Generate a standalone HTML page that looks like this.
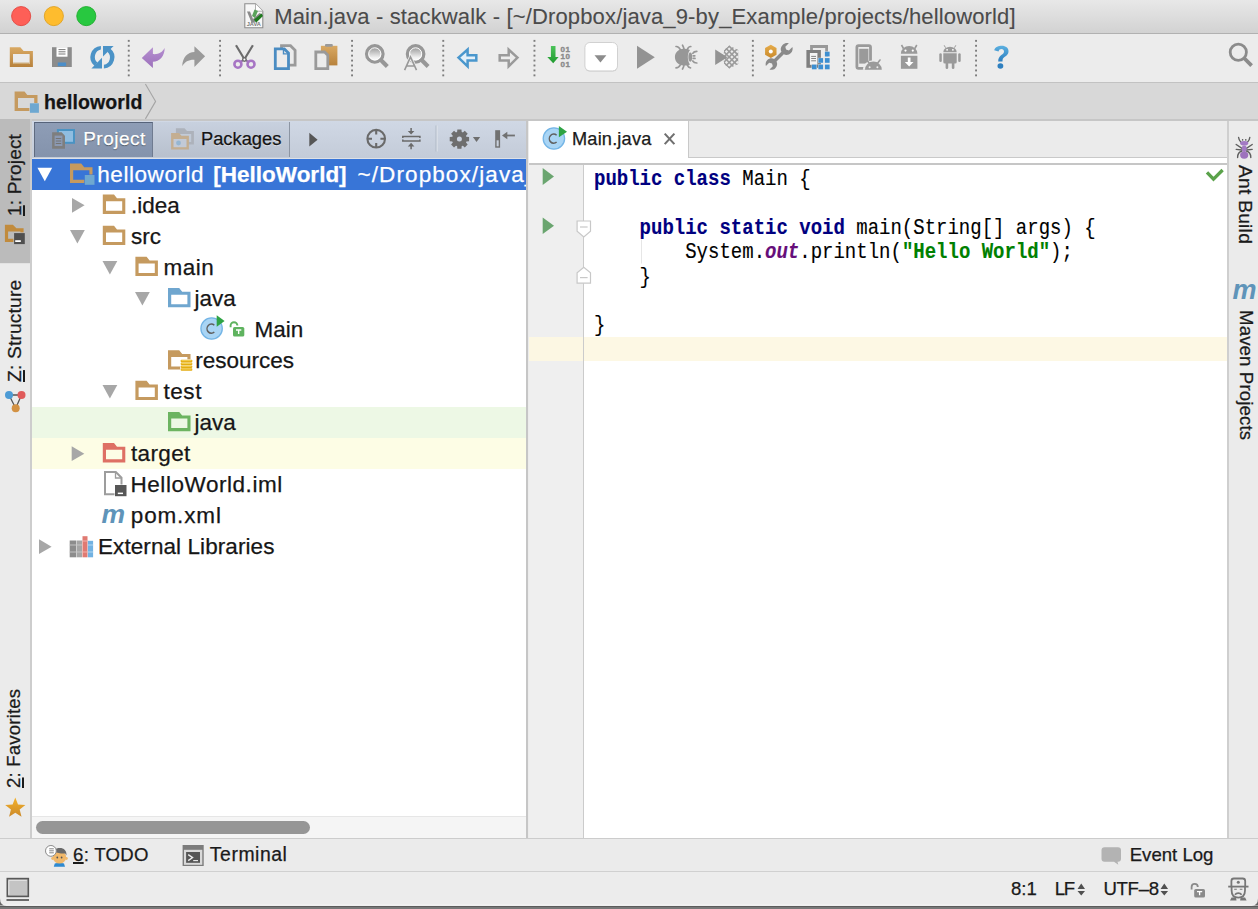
<!DOCTYPE html>
<html><head><meta charset="utf-8">
<style>
*{margin:0;padding:0;box-sizing:border-box}
html,body{width:1258px;height:909px;overflow:hidden;background:#ececec;font-family:"Liberation Sans",sans-serif;color:#1a1a1a}
.a{position:absolute}
.t{position:absolute;white-space:nowrap;-webkit-text-stroke:0.25px currentColor}
.code{position:absolute;left:594px;-webkit-text-stroke:0.12px currentColor;transform-origin:0 0;transform:scaleY(1.18);font-family:"Liberation Mono",monospace;font-size:19px;white-space:pre;color:#000;height:24.45px;line-height:24.45px}
.kw{color:#000080;font-weight:bold}
svg{position:absolute;left:0;top:0}
</style></head><body>
<div class="a" style="left:0px;top:0px;width:1258px;height:33px;background:linear-gradient(#e8e8e8,#d2d2d2);"></div>
<div class="a" style="left:0px;top:33px;width:1258px;height:1px;background:#b1b1b1;"></div>
<div class="a" style="left:0px;top:34px;width:1258px;height:47.5px;background:#ececec;"></div>
<div class="a" style="left:0px;top:81.5px;width:1258px;height:1px;background:#c2c2c2;"></div>
<div class="a" style="left:0px;top:82.5px;width:1258px;height:36.5px;background:#d8d8d8;"></div>
<div class="a" style="left:32px;top:119px;width:1226px;height:1.6px;background:#c6c6c6;"></div>
<div class="a" style="left:0px;top:119px;width:30px;height:718.5px;background:#ebebeb;"></div>
<div class="a" style="left:0px;top:119px;width:30px;height:143.5px;background:#bbbbbb;"></div>
<div class="a" style="left:0px;top:262.5px;width:30px;height:1px;background:#e2e2e2;"></div>
<div class="a" style="left:30px;top:119px;width:2px;height:718.5px;background:#cdcdcd;"></div>
<div class="a" style="left:32px;top:120.5px;width:495px;height:37px;background:linear-gradient(#d0d8e5,#c3cbd8);"></div>
<div class="a" style="left:32px;top:157.5px;width:495px;height:1.5px;background:#dde1e7;"></div>
<div class="a" style="left:34px;top:121.5px;width:119px;height:35px;background:linear-gradient(#8e9db6,#8493ac);border-right:1px solid #6f7b90;border-left:1px solid #5f6b80;border-top:1.3px solid #56637a"></div>
<div class="a" style="left:153px;top:121.5px;width:137px;height:35px;background:linear-gradient(#c8d1df,#b8c0cd);border-right:1.5px solid #8c95a3"></div>
<div class="a" style="left:32px;top:159px;width:495px;height:657px;background:#fff;"></div>
<div class="a" style="left:32px;top:816px;width:495px;height:1px;background:#e6e6e6;"></div>
<div class="a" style="left:32px;top:817px;width:495px;height:20.5px;background:#f5f5f5;"></div>
<div class="a" style="left:36px;top:821px;width:273.5px;height:13px;background:#969696;border-radius:6.5px"></div>
<div class="a" style="left:526.3px;top:120.5px;width:2.2px;height:717px;background:#c6c6c6;"></div>
<div class="a" style="left:528.5px;top:120.5px;width:698.5px;height:37.5px;background:#ebebeb;"></div>
<div class="a" style="left:528.5px;top:120.5px;width:160px;height:43px;background:#fff;"></div>
<div class="a" style="left:688px;top:120.5px;width:1px;height:37.5px;background:#c9c9c9;"></div>
<div class="a" style="left:689px;top:157px;width:538px;height:1.2px;background:#c9c9c9;"></div>
<div class="a" style="left:689px;top:158.2px;width:538px;height:5.3px;background:#fff;"></div>
<div class="a" style="left:528.5px;top:163.3px;width:698.5px;height:1.4px;background:#c6c6c6;"></div>
<div class="a" style="left:528.5px;top:164.7px;width:54px;height:673px;background:#efefef;"></div>
<div class="a" style="left:582.5px;top:164.7px;width:1.6px;height:673px;background:#cbcbcb;"></div>
<div class="a" style="left:584.1px;top:164.7px;width:643px;height:673px;background:#fff;"></div>
<div class="a" style="left:528.5px;top:336.7px;width:54px;height:24.3px;background:#fcf7e3;"></div>
<div class="a" style="left:584.1px;top:336.7px;width:643px;height:24.3px;background:#fdf8e4;"></div>
<div class="a" style="left:1227px;top:120.5px;width:1.5px;height:717px;background:#cfcfcf;"></div>
<div class="a" style="left:1228.5px;top:120.5px;width:29.5px;height:717px;background:#ebebeb;"></div>
<div class="a" style="left:0px;top:837.5px;width:1258px;height:1px;background:#cccccc;"></div>
<div class="a" style="left:0px;top:838.5px;width:1258px;height:32px;background:#ebebeb;"></div>
<div class="a" style="left:0px;top:870.5px;width:1258px;height:1px;background:#d0d0d0;"></div>
<div class="a" style="left:0px;top:871.5px;width:1258px;height:34px;background:#ececec;"></div>
<div class="a" style="left:0px;top:904px;width:1258px;height:1.5px;background:#f0f0f0;"></div>
<div class="a" style="left:0px;top:905.6px;width:1258px;height:1.6px;background:#5b5b5b;"></div>
<div class="a" style="left:0px;top:907.2px;width:1258px;height:1.8px;background:#787878;"></div>
<div class="a" style="left:32px;top:159px;width:494.3px;height:30.5px;background:#3875d7;"></div>
<div class="a" style="left:32px;top:406.5px;width:494.3px;height:31px;background:#edf8e5;"></div>
<div class="a" style="left:32px;top:437.5px;width:494.3px;height:31px;background:#fdfde5;"></div>
<div class="t" style="left:274.20px;top:5.58px;font-size:22px;line-height:22px;color:#4b4b4b;font-weight:normal;letter-spacing:0.15px;-webkit-text-stroke:0.1px currentColor">Main.java - stackwalk - [~/Dropbox/java_9-by_Example/projects/helloworld]</div>
<div class="t" style="left:44.00px;top:92.89px;font-size:19.5px;line-height:19.5px;color:#141414;font-weight:bold;letter-spacing:0.1px">helloworld</div>
<div class="t" style="left:83.20px;top:129.42px;font-size:19px;line-height:19px;color:#fff;font-weight:normal;letter-spacing:0.5px;text-shadow:0 1px 1px rgba(0,0,0,.45)">Project</div>
<div class="t" style="left:201.00px;top:130.01px;font-size:18.3px;line-height:18.3px;color:#141414;font-weight:normal;text-shadow:0 1px 0 rgba(255,255,255,.5)">Packages</div>
<div class="t" style="left:572.00px;top:129.59px;font-size:18.2px;line-height:18.2px;color:#1a1a1a;font-weight:normal;letter-spacing:0.18px">Main.java</div>
<div class="a" style="left:32px;top:158px;width:494.3px;height:32px;overflow:hidden"><div class="t" style="left:65.30px;top:5.55px;font-size:22.5px;line-height:22.5px;color:#fff;font-weight:normal;letter-spacing:0.55px">helloworld</div>
<div class="t" style="left:181.30px;top:5.55px;font-size:22.5px;line-height:22.5px;color:#fff;font-weight:bold;letter-spacing:0px">[HelloWorld]</div>
<div class="t" style="left:325.50px;top:5.55px;font-size:22.5px;line-height:22.5px;color:#fff;font-weight:normal;letter-spacing:1.1px">~/Dropbox/java_9-by_Example/projects/helloworld</div>
</div>
<div class="t" style="left:131.00px;top:194.55px;font-size:22.5px;line-height:22.5px;color:#161616;font-weight:normal;letter-spacing:0px">.idea</div>
<div class="t" style="left:131.00px;top:225.55px;font-size:22.5px;line-height:22.5px;color:#161616;font-weight:normal;letter-spacing:0px">src</div>
<div class="t" style="left:163.50px;top:256.55px;font-size:22.5px;line-height:22.5px;color:#161616;font-weight:normal;letter-spacing:0.5px">main</div>
<div class="t" style="left:194.50px;top:287.55px;font-size:22.5px;line-height:22.5px;color:#161616;font-weight:normal;letter-spacing:0px">java</div>
<div class="t" style="left:254.50px;top:318.55px;font-size:22.5px;line-height:22.5px;color:#161616;font-weight:normal;letter-spacing:0px">Main</div>
<div class="t" style="left:195.20px;top:349.55px;font-size:22.5px;line-height:22.5px;color:#161616;font-weight:normal;letter-spacing:0px">resources</div>
<div class="t" style="left:163.50px;top:380.55px;font-size:22.5px;line-height:22.5px;color:#161616;font-weight:normal;letter-spacing:0.55px">test</div>
<div class="t" style="left:194.50px;top:411.55px;font-size:22.5px;line-height:22.5px;color:#161616;font-weight:normal;letter-spacing:0px">java</div>
<div class="t" style="left:131.00px;top:442.55px;font-size:22.5px;line-height:22.5px;color:#161616;font-weight:normal;letter-spacing:0.35px">target</div>
<div class="t" style="left:130.50px;top:473.55px;font-size:22.5px;line-height:22.5px;color:#161616;font-weight:normal;letter-spacing:0.55px">HelloWorld.iml</div>
<div class="t" style="left:130.80px;top:504.55px;font-size:22.5px;line-height:22.5px;color:#161616;font-weight:normal;letter-spacing:0.85px">pom.xml</div>
<div class="t" style="left:98.00px;top:535.55px;font-size:22.5px;line-height:22.5px;color:#161616;font-weight:normal;letter-spacing:0.08px">External Libraries</div>
<div class="t" style="left:73.00px;top:845.86px;font-size:18.6px;line-height:18.6px;color:#1a1a1a;font-weight:normal;letter-spacing:0.3px"><u style="text-decoration-thickness:1.6px;text-underline-offset:1.2px">6</u>: TODO</div>
<div class="t" style="left:209.80px;top:845.18px;font-size:19.4px;line-height:19.4px;color:#1a1a1a;font-weight:normal;letter-spacing:0.55px">Terminal</div>
<div class="t" style="left:1129.70px;top:845.86px;font-size:18.6px;line-height:18.6px;color:#1a1a1a;font-weight:normal;letter-spacing:0px">Event Log</div>
<div class="t" style="left:1011.00px;top:880.26px;font-size:18.6px;line-height:18.6px;color:#1a1a1a;font-weight:normal;">8:1</div>
<div class="t" style="left:1054.80px;top:880.26px;font-size:18.6px;line-height:18.6px;color:#1a1a1a;font-weight:normal;letter-spacing:-1.5px">LF</div>
<div class="t" style="left:1103.40px;top:880.26px;font-size:18.6px;line-height:18.6px;color:#1a1a1a;font-weight:normal;letter-spacing:-0.3px">UTF&#8211;8</div>
<div class="t" style="left:4.59px;top:215.90px;font-size:19px;line-height:19px;transform-origin:0 0;transform:rotate(-90deg);letter-spacing:0.18px"><u style="text-decoration-thickness:1.5px;text-underline-offset:2px">1</u>: Project</div>
<div class="t" style="left:4.56px;top:382.40px;font-size:19.2px;line-height:19.2px;transform-origin:0 0;transform:rotate(-90deg);letter-spacing:0.18px"><u style="text-decoration-thickness:1.5px;text-underline-offset:2px">Z</u>: Structure</div>
<div class="t" style="left:4.65px;top:787.80px;font-size:18.6px;line-height:18.6px;transform-origin:0 0;transform:rotate(-90deg);letter-spacing:0.18px"><u style="text-decoration-thickness:1.5px;text-underline-offset:2px">2</u>: Favorites</div>
<div class="t" style="left:1254.94px;top:165.30px;font-size:19.2px;line-height:19.2px;transform-origin:0 0;transform:rotate(90deg);letter-spacing:0.25px">Ant Build</div>
<div class="t" style="left:1254.85px;top:309.50px;font-size:18.6px;line-height:18.6px;transform-origin:0 0;transform:rotate(90deg);letter-spacing:0.15px">Maven Projects</div>
<div class="code" style="top:164.75px"><span class="kw">public class</span> Main {</div>
<div class="code" style="top:213.65px">    <span class="kw">public static void</span> main(String[] args) {</div>
<div class="code" style="top:238.10px">        System.<b style="color:#660e7a;font-style:italic">out</b>.println(<b style="color:#008000">"Hello World"</b>);</div>
<div class="code" style="top:262.55px">    }</div>
<div class="code" style="top:311.45px">}</div>
<svg width="1258" height="909" viewBox="0 0 1258 909">
<circle cx="21.15" cy="16.1" r="9.55" fill="#fe5f57" stroke="#e2463f" stroke-width="0.9"/>
<circle cx="53.85" cy="16.1" r="9.55" fill="#febc2e" stroke="#dfa123" stroke-width="0.9"/>
<circle cx="86.3" cy="16.1" r="9.55" fill="#28c840" stroke="#1dad2b" stroke-width="0.9"/>
<g transform="translate(244,3)"><path d="M0.8,0.8 H11.5 L18.8,8.2 V24.7 H0.8 Z" fill="#f7f7f7" stroke="#8d8d8d" stroke-width="1.1"/><path d="M11.5,0.8 V8.2 H18.8" fill="#fff" stroke="#a5a5a5" stroke-width="0.9"/><path d="M3,8.5 L6,8.5 L9,16 L15.5,10 L18.5,11.5 L10,19.5 L7.5,19.5 Z" fill="#8a8a8a"/><path d="M10.5,6.5 L14,8 L11,15 L8,13 Z" fill="#5aa35a"/><path d="M10,16.5 L17.5,10.5 L19,13 L12,19.8 Z" fill="#1f7a1f"/><text x="9.8" y="23.3" font-size="5.6" font-family="Liberation Sans" text-anchor="middle" fill="#777" font-weight="bold">JAVA</text></g>
<rect x="127.80" y="39.90" width="1.9" height="1.9" fill="#7c7c7c"/><rect x="127.80" y="44.83" width="1.9" height="1.9" fill="#7c7c7c"/><rect x="127.80" y="49.76" width="1.9" height="1.9" fill="#7c7c7c"/><rect x="127.80" y="54.69" width="1.9" height="1.9" fill="#7c7c7c"/><rect x="127.80" y="59.62" width="1.9" height="1.9" fill="#7c7c7c"/><rect x="127.80" y="64.55" width="1.9" height="1.9" fill="#7c7c7c"/><rect x="127.80" y="69.48" width="1.9" height="1.9" fill="#7c7c7c"/><rect x="127.80" y="74.41" width="1.9" height="1.9" fill="#7c7c7c"/>
<rect x="219.10" y="39.90" width="1.9" height="1.9" fill="#7c7c7c"/><rect x="219.10" y="44.83" width="1.9" height="1.9" fill="#7c7c7c"/><rect x="219.10" y="49.76" width="1.9" height="1.9" fill="#7c7c7c"/><rect x="219.10" y="54.69" width="1.9" height="1.9" fill="#7c7c7c"/><rect x="219.10" y="59.62" width="1.9" height="1.9" fill="#7c7c7c"/><rect x="219.10" y="64.55" width="1.9" height="1.9" fill="#7c7c7c"/><rect x="219.10" y="69.48" width="1.9" height="1.9" fill="#7c7c7c"/><rect x="219.10" y="74.41" width="1.9" height="1.9" fill="#7c7c7c"/>
<rect x="351.10" y="39.90" width="1.9" height="1.9" fill="#7c7c7c"/><rect x="351.10" y="44.83" width="1.9" height="1.9" fill="#7c7c7c"/><rect x="351.10" y="49.76" width="1.9" height="1.9" fill="#7c7c7c"/><rect x="351.10" y="54.69" width="1.9" height="1.9" fill="#7c7c7c"/><rect x="351.10" y="59.62" width="1.9" height="1.9" fill="#7c7c7c"/><rect x="351.10" y="64.55" width="1.9" height="1.9" fill="#7c7c7c"/><rect x="351.10" y="69.48" width="1.9" height="1.9" fill="#7c7c7c"/><rect x="351.10" y="74.41" width="1.9" height="1.9" fill="#7c7c7c"/>
<rect x="442.30" y="39.90" width="1.9" height="1.9" fill="#7c7c7c"/><rect x="442.30" y="44.83" width="1.9" height="1.9" fill="#7c7c7c"/><rect x="442.30" y="49.76" width="1.9" height="1.9" fill="#7c7c7c"/><rect x="442.30" y="54.69" width="1.9" height="1.9" fill="#7c7c7c"/><rect x="442.30" y="59.62" width="1.9" height="1.9" fill="#7c7c7c"/><rect x="442.30" y="64.55" width="1.9" height="1.9" fill="#7c7c7c"/><rect x="442.30" y="69.48" width="1.9" height="1.9" fill="#7c7c7c"/><rect x="442.30" y="74.41" width="1.9" height="1.9" fill="#7c7c7c"/>
<rect x="533.50" y="39.90" width="1.9" height="1.9" fill="#7c7c7c"/><rect x="533.50" y="44.83" width="1.9" height="1.9" fill="#7c7c7c"/><rect x="533.50" y="49.76" width="1.9" height="1.9" fill="#7c7c7c"/><rect x="533.50" y="54.69" width="1.9" height="1.9" fill="#7c7c7c"/><rect x="533.50" y="59.62" width="1.9" height="1.9" fill="#7c7c7c"/><rect x="533.50" y="64.55" width="1.9" height="1.9" fill="#7c7c7c"/><rect x="533.50" y="69.48" width="1.9" height="1.9" fill="#7c7c7c"/><rect x="533.50" y="74.41" width="1.9" height="1.9" fill="#7c7c7c"/>
<rect x="751.90" y="39.90" width="1.9" height="1.9" fill="#7c7c7c"/><rect x="751.90" y="44.83" width="1.9" height="1.9" fill="#7c7c7c"/><rect x="751.90" y="49.76" width="1.9" height="1.9" fill="#7c7c7c"/><rect x="751.90" y="54.69" width="1.9" height="1.9" fill="#7c7c7c"/><rect x="751.90" y="59.62" width="1.9" height="1.9" fill="#7c7c7c"/><rect x="751.90" y="64.55" width="1.9" height="1.9" fill="#7c7c7c"/><rect x="751.90" y="69.48" width="1.9" height="1.9" fill="#7c7c7c"/><rect x="751.90" y="74.41" width="1.9" height="1.9" fill="#7c7c7c"/>
<rect x="843.10" y="39.90" width="1.9" height="1.9" fill="#7c7c7c"/><rect x="843.10" y="44.83" width="1.9" height="1.9" fill="#7c7c7c"/><rect x="843.10" y="49.76" width="1.9" height="1.9" fill="#7c7c7c"/><rect x="843.10" y="54.69" width="1.9" height="1.9" fill="#7c7c7c"/><rect x="843.10" y="59.62" width="1.9" height="1.9" fill="#7c7c7c"/><rect x="843.10" y="64.55" width="1.9" height="1.9" fill="#7c7c7c"/><rect x="843.10" y="69.48" width="1.9" height="1.9" fill="#7c7c7c"/><rect x="843.10" y="74.41" width="1.9" height="1.9" fill="#7c7c7c"/>
<rect x="975.10" y="39.90" width="1.9" height="1.9" fill="#7c7c7c"/><rect x="975.10" y="44.83" width="1.9" height="1.9" fill="#7c7c7c"/><rect x="975.10" y="49.76" width="1.9" height="1.9" fill="#7c7c7c"/><rect x="975.10" y="54.69" width="1.9" height="1.9" fill="#7c7c7c"/><rect x="975.10" y="59.62" width="1.9" height="1.9" fill="#7c7c7c"/><rect x="975.10" y="64.55" width="1.9" height="1.9" fill="#7c7c7c"/><rect x="975.10" y="69.48" width="1.9" height="1.9" fill="#7c7c7c"/><rect x="975.10" y="74.41" width="1.9" height="1.9" fill="#7c7c7c"/>
<defs><linearGradient id="gOr" x1="0" y1="0" x2="0" y2="1"><stop offset="0" stop-color="#d9a963"/><stop offset="1" stop-color="#b8823c"/></linearGradient><linearGradient id="gPur" x1="0" y1="0" x2="0" y2="1"><stop offset="0" stop-color="#b58fd0"/><stop offset="1" stop-color="#9c70bb"/></linearGradient><linearGradient id="gLens" x1="0" y1="0" x2="0" y2="1"><stop offset="0.1" stop-color="#9a9a9a"/><stop offset="0.75" stop-color="#f4f4f4"/></linearGradient><linearGradient id="gGreen" x1="0" y1="0" x2="0" y2="1"><stop offset="0" stop-color="#4cc35a"/><stop offset="1" stop-color="#1f9a2e"/></linearGradient><linearGradient id="gHelp" x1="0" y1="0" x2="0" y2="1"><stop offset="0" stop-color="#5cb0e0"/><stop offset="1" stop-color="#2d7fc0"/></linearGradient><linearGradient id="gStar" x1="0" y1="0" x2="0" y2="1"><stop offset="0" stop-color="#f3b12c"/><stop offset="1" stop-color="#cc8a2a"/></linearGradient><linearGradient id="gNut" x1="0" y1="0" x2="0" y2="1"><stop offset="0" stop-color="#e6ac4a"/><stop offset="1" stop-color="#c98a2c"/></linearGradient></defs>
<path d="M9.8,47.3 H20.3 L23.6,51 H32.9 V66.9 H9.8 Z M13.1,54.1 V63.9 H29.4 V54.1 Z" fill="url(#gOr)" fill-rule="evenodd"/>
<rect x="13.1" y="54.1" width="16.3" height="9.8" fill="#ebebeb"/>
<rect x="13.1" y="62.6" width="16.3" height="1.3" fill="#c9a36a"/>
<path d="M52,47.2 H71.8 V67 H52 Z" fill="#8c8c8c"/>
<rect x="56.5" y="47.2" width="11" height="9.5" fill="#fff"/>
<path d="M58.5,49.6 H65.5 M58.5,51.8 H65.5 M58.5,54 H65.5" stroke="#6a6a6a" stroke-width="0.9"/>
<rect x="57.8" y="62.5" width="8.3" height="3.6" fill="#4b8ec9"/>
<g fill="#4b93c7"><path d="M100.9,45.9 A11.3,11.3 0 0 0 94.6,66 L97.4,62.6 A7.5,7.5 0 0 1 100.9,49.6 Z"/><path d="M91.4,68.6 H102 V57.8 Z"/><path d="M103.9,68.5 A11.3,11.3 0 0 0 110.2,48.4 L107.4,51.8 A7.5,7.5 0 0 1 103.9,64.8 Z"/><path d="M113.6,45.9 H103 V56.6 Z"/></g>
<path d="M141.8,58 L152.9,47.3 V54.1 C158.5,54.6 162.3,52.2 164.7,48 C164.6,56.3 159.6,61.5 152.9,61.7 V68 Z" fill="url(#gPur)"/>
<path d="M205.1,56.3 L194.4,46.2 V52.1 C187.6,52.1 182.6,57.5 182.2,66.3 C184.8,61.7 188.8,59.6 194.4,59.8 V67 Z" fill="#9a9a9a"/>
<path d="M236,45.2 L244.4,59.2 L252.9,45.2" fill="none" stroke="#6c6c6c" stroke-width="2.2"/>
<path d="M244.4,59.2 L239.8,62.5 M244.4,59.2 L249.2,62.5" stroke="#8a6aa0" stroke-width="2"/>
<circle cx="244.4" cy="59.5" r="2.4" fill="#6c6c6c"/><circle cx="244.4" cy="59.5" r="1" fill="#fff"/>
<circle cx="237.9" cy="64.2" r="3.5" fill="none" stroke="#a775c4" stroke-width="2.6"/>
<circle cx="251" cy="64.2" r="3.5" fill="none" stroke="#a775c4" stroke-width="2.6"/>
<path d="M281.5,45.7 H290.5 L295.1,50.3 V65.2 H281.5 Z" fill="#ececec" stroke="#9a9a9a" stroke-width="2.8"/>
<path d="M275.3,48.9 H284.3 L288.5,53.1 V68.6 H275.3 Z" fill="#ececec" stroke="#4a8cc2" stroke-width="2.8"/>
<path d="M283.5,49 V53.9 H288.4" fill="none" stroke="#4a8cc2" stroke-width="1.4"/>
<rect x="320.9" y="45.8" width="16.5" height="19.6" fill="url(#gOr)"/>
<rect x="325" y="44" width="7.8" height="2.8" rx="1" fill="#9a9a9a"/>
<path d="M315.8,52 H324.6 L327.8,55.2 V68.6 H315.8 Z" fill="#ececec" stroke="#9a9a9a" stroke-width="2.8"/>
<circle cx="374.8" cy="53.9" r="8.2" fill="url(#gLens)" stroke="#979797" stroke-width="3.3"/><circle cx="374.8" cy="53.9" r="6.1" fill="none" stroke="#fff" stroke-width="1"/>
<path d="M380.6,59.7 L387.3,66.4" stroke="#979797" stroke-width="4.2"/>
<circle cx="415.6" cy="53.9" r="8.2" fill="url(#gLens)" stroke="#979797" stroke-width="3.3"/><circle cx="415.6" cy="53.9" r="6.1" fill="none" stroke="#fff" stroke-width="1"/>
<path d="M421.4,59.7 L428.1,66.4" stroke="#979797" stroke-width="4.2"/>
<path d="M404.6,70.2 L410.5,57 L416.5,70.2" fill="none" stroke="#ececec" stroke-width="3.2"/>
<path d="M404.6,70.2 L410.5,57 L416.5,70.2 M406.6,66 H414.5" fill="none" stroke="#989898" stroke-width="1.6"/>
<path d="M458.5,57.6 L467.6,49.6 V55.2 H476.3 V60.6 H467.6 V66.3 Z" fill="#e4f0f9" stroke="#4a97cd" stroke-width="2.5" stroke-linejoin="miter"/>
<path d="M517.5,57.6 L508.7,49.6 V55.2 H499.7 V60.6 H508.7 V66.3 Z" fill="#ececec" stroke="#9a9a9a" stroke-width="2.5"/>
<path d="M550.9,46 H555.5 V57 H558.6 L553.2,63.3 L547.3,57 H550.9 Z" fill="url(#gGreen)"/>
<g font-family="Liberation Sans" font-weight="bold" font-size="8" fill="#8a8a8a" stroke="#8a8a8a" stroke-width="0.35" letter-spacing="0.4"><text x="560.6" y="51.7">01</text><text x="560.6" y="59.2">10</text><text x="560.6" y="67">01</text></g>
<rect x="584.9" y="43.2" width="32.6" height="28.4" rx="5" fill="#d2d2d2"/>
<rect x="584.9" y="42.5" width="32.6" height="28.4" rx="5" fill="#fff" stroke="#cdcdcd" stroke-width="0.9"/>
<path d="M594.5,55.3 H606.4 L600.45,62.6 Z" fill="#8c8c8c"/>
<path d="M637,45.8 L654.8,57.3 L637,68.8 Z" fill="#939393"/>
<g fill="none" stroke="#979797" stroke-width="1.7" stroke-linecap="round"><path d="M676,46.5 C678,46.3 679.3,47.5 680.3,49.6 M682.5,45.2 C683.2,46.5 683.8,47.8 684,49.2 M690.8,46.5 C689,46.5 688,47.5 687.3,49.5"/><path d="M676,67.8 C678,67.8 679.3,66.8 680.3,64.8 M682.5,69 C683.2,67.8 683.8,66.5 684,65.2 M690.5,67.8 C689,67.8 688,66.8 687.3,64.8"/><path d="M696.8,51.3 C694.8,51.3 693.5,52 692.8,53.3 M693.2,55.8 H694.8 M693.2,58.4 H695 M696.8,63 C694.8,63 693.5,62.3 692.8,61"/></g>
<path d="M690,49.9 C686.5,48.3 682,48.3 679,50 C676,51.8 674.9,54.5 674.9,57 C674.9,59.8 676,62.5 679,64.2 C682,66 686.5,66 690,64.4 C687.3,61 687,53.3 690,49.9 Z" fill="#979797"/>
<ellipse cx="690.3" cy="57.1" rx="1.9" ry="4.6" fill="#979797"/>
<defs><clipPath id="cvClip"><path d="M720.5,57.1 L729.3,45.6 L738.2,57.1 L729.3,68.6 Z M724,50 L729.3,45.6 L738.2,50 V64 L729.3,68.6 L724,64 Z"/></clipPath></defs>
<g clip-path="url(#cvClip)" stroke="#9b9b9b" stroke-width="1.6"><path d="M700.0,44 L726.0,70"/><path d="M700.0,70 L726.0,44"/><path d="M705.4,44 L731.4,70"/><path d="M705.4,70 L731.4,44"/><path d="M710.8,44 L736.8,70"/><path d="M710.8,70 L736.8,44"/><path d="M716.2,44 L742.2,70"/><path d="M716.2,70 L742.2,44"/><path d="M721.6,44 L747.6,70"/><path d="M721.6,70 L747.6,44"/><path d="M727.0,44 L753.0,70"/><path d="M727.0,70 L753.0,44"/><path d="M732.4,44 L758.4,70"/><path d="M732.4,70 L758.4,44"/><path d="M737.8,44 L763.8,70"/><path d="M737.8,70 L763.8,44"/><path d="M743.2,44 L769.2,70"/><path d="M743.2,70 L769.2,44"/></g>
<path d="M715.2,49.5 L727.5,57.3 L715.2,65 Z" fill="#939393"/>
<path d="M766.5,62.2 C768.8,60 771.5,59.8 773.5,61 L780.8,53.8 C779.6,51.6 780,48.7 782.2,46.7 C784,45 786.3,44.7 788.2,45.3 L784.7,48.8 L785.5,51.6 L788.3,52.4 L791.8,48.9 C792.4,50.8 792,53.2 790.3,55 C788.3,57 785.4,57.4 783.2,56.2 L775.9,63.5 C777.1,65.6 776.7,68.5 774.5,70.4 C772.8,71.9 770.6,72.1 768.9,71.6 L772.2,68.3 L771.4,65.5 L768.6,64.7 L765.3,68 C764.7,66 765,63.8 766.5,62.2 Z" fill="#8a8a8a" transform="translate(0.6,-2) scale(1)"/>
<polygon points="770.80,58.00 765.08,54.70 765.08,48.10 770.80,44.80 776.52,48.10 776.52,54.70" fill="url(#gNut)"/>
<circle cx="770.8" cy="51.4" r="2" fill="#fff"/>
<path d="M811.5,58 V46.5 H826.6 V57" fill="none" stroke="#999" stroke-width="2.8"/>
<rect x="806.4" y="50" width="14.5" height="17.8" fill="#7f7f7f"/>
<rect x="809.9" y="53" width="7.5" height="11.8" fill="#f4f4f4"/>
<path d="M811.2,56.4 H816 M811.2,58.5 H816 M811.2,60.8 H816" stroke="#777" stroke-width="0.9"/>
<rect x="824.6" y="51.4" width="5.3" height="5.3" fill="#ececec"/><rect x="824.9" y="51.699999999999996" width="4.7" height="4.7" fill="#3d8fd1"/>
<rect x="818.1" y="57.8" width="5.3" height="5.3" fill="#ececec"/><rect x="818.4" y="58.099999999999994" width="4.7" height="4.7" fill="#3d8fd1"/>
<rect x="824.6" y="57.8" width="5.3" height="5.3" fill="#ececec"/><rect x="824.9" y="58.099999999999994" width="4.7" height="4.7" fill="#3d8fd1"/>
<rect x="811.6" y="64.3" width="5.3" height="5.3" fill="#ececec"/><rect x="811.9" y="64.6" width="4.7" height="4.7" fill="#3d8fd1"/>
<rect x="818.1" y="64.3" width="5.3" height="5.3" fill="#ececec"/><rect x="818.4" y="64.6" width="4.7" height="4.7" fill="#3d8fd1"/>
<rect x="824.6" y="64.3" width="5.3" height="5.3" fill="#ececec"/><rect x="824.9" y="64.6" width="4.7" height="4.7" fill="#3d8fd1"/>
<rect x="856.9" y="45.7" width="13.6" height="22.6" rx="1.6" fill="none" stroke="#9a9a9a" stroke-width="2.8"/>
<rect x="859.2" y="48.8" width="9.2" height="14.8" fill="#9a9a9a"/>
<path d="M862.8,69.8 A10.2,9.6 0 0 1 883.2,69.8 Z" fill="#ececec"/>
<path d="M865,69.7 A8,7.8 0 0 1 881.8,69.7 Z" fill="#9a9a9a"/>
<path d="M869.3,63.2 L866.8,60 M877.5,63.2 L880,60" stroke="#9a9a9a" stroke-width="1.6" stroke-linecap="round"/>
<circle cx="869.6" cy="67.2" r="1" fill="#ececec"/><circle cx="877.4" cy="67.2" r="1" fill="#ececec"/>
<path d="M900.9,53.7 A8.25,7.6 0 0 1 917.4,53.7 Z" fill="#9a9a9a"/>
<path d="M903.5,48.5 L901.5,45 M914.8,48.5 L916.8,45" stroke="#9a9a9a" stroke-width="1.6"/>
<circle cx="905.5" cy="50.6" r="1.1" fill="#fff"/><circle cx="912.8" cy="50.6" r="1.1" fill="#fff"/>
<rect x="900.9" y="55.8" width="16.5" height="13" fill="#9a9a9a"/>
<path d="M907.8,57.5 H910.5 V62 H913.5 L909.15,66.5 L904.8,62 H907.8 Z" fill="#fff"/>
<path d="M943.3,52.3 A6.7,5.6 0 0 1 956.7,52.3 Z" fill="#9a9a9a"/>
<path d="M945.5,47.7 L944.2,45.3 M954.5,47.7 L955.8,45.3" stroke="#9a9a9a" stroke-width="1"/>
<circle cx="947.1" cy="49.8" r="0.9" fill="#fff"/><circle cx="952.9" cy="49.8" r="0.9" fill="#fff"/>
<path d="M943.3,53.3 H956.7 V62 A1.5,1.5 0 0 1 955.2,63.5 H944.8 A1.5,1.5 0 0 1 943.3,62 Z" fill="#9a9a9a"/>
<rect x="939.3" y="53.3" width="2.5" height="8.6" rx="1.25" fill="#9a9a9a"/><rect x="958.2" y="53.3" width="2.5" height="8.6" rx="1.25" fill="#9a9a9a"/>
<rect x="945.6" y="61" width="2.6" height="8" rx="1.3" fill="#9a9a9a"/><rect x="951.8" y="61" width="2.6" height="8" rx="1.3" fill="#9a9a9a"/>
<path d="M994.2,50.2 C995.2,46.8 998.6,45.7 1001.8,45.7 C1005.8,45.7 1008.5,48 1008.5,51.2 C1008.5,54.6 1006,55.9 1004.2,57.3 C1002.9,58.3 1002.5,59.2 1002.5,61.4 H998.2 C998.2,58.4 999.3,56.7 1001.3,55.1 C1003,53.8 1004,53 1004,51.4 C1004,49.9 1003,49 1001.5,49 C1000,49 998.9,49.8 998.5,51.6 Z" fill="url(#gHelp)"/>
<ellipse cx="1000.4" cy="66" rx="2.9" ry="2.7" fill="#2f80c0"/>
<circle cx="1238.3" cy="52.3" r="8.1" fill="none" stroke="#8b8b8b" stroke-width="2.8"/>
<path d="M1244,58 L1251.6,65.6" stroke="#8b8b8b" stroke-width="3.8"/>
<path d="M14.6,91.5 H24.5 L27.3,94.9 H37.5 V111 H14.6 Z M18,98.1 V108 H34.2 V98.1 Z" fill="#c59a5f" fill-rule="evenodd"/>
<rect x="29.4" y="103" width="9.5" height="9.8" fill="#d8d8d8"/><rect x="29.9" y="103.3" width="9" height="9.5" fill="#6ea8d1"/>
<path d="M145.4,84 L155.6,101.4 L145.4,118.9" fill="none" stroke="#a5a5a5" stroke-width="1.1"/>
<path d="M4.9,224.7 H12.9 L16.4,228.2 H23.6 V242 H4.9 Z M8.1,231.4 V238.8 H20.4 V231.4 Z" fill="#c18b3d" fill-rule="evenodd"/>
<rect x="13.4" y="232.4" width="12.1" height="12.4" fill="#bbbbbb"/><rect x="14.1" y="233.1" width="10.7" height="11" fill="#4f4f4f"/>
<rect x="15.2" y="240.2" width="5.6" height="1.8" fill="#fff"/>
<path d="M9,395 H21.5 L15.7,408.3 Z" fill="none" stroke="#555" stroke-width="1.3"/>
<circle cx="9" cy="395" r="4" fill="#4d9bd5"/><circle cx="21.5" cy="395" r="4" fill="#e05b5b"/><circle cx="15.7" cy="408.3" r="4" fill="#d39244"/>
<polygon points="15.30,797.60 18.00,804.48 25.38,804.92 19.67,809.62 21.53,816.78 15.30,812.80 9.07,816.78 10.93,809.62 5.22,804.92 12.60,804.48" fill="url(#gStar)"/>
<rect x="57.9" y="130" width="16.1" height="12.8" fill="#8fbde1" stroke="#4a93c3" stroke-width="2"/>
<path d="M52.1,132.3 H61.6 L65,135.7 V148.8 H52.1 Z" fill="#7e7e7e"/>
<rect x="54.6" y="135.6" width="7.8" height="10.4" fill="#8b99b2"/>
<path d="M55.8,138.5 H61.2 M55.8,141 H61.2 M55.8,143.5 H61.2" stroke="#747474" stroke-width="1"/>
<path d="M175.9,128.3 H184.5 L187,131 H193.9 V144.6 H175.9 Z M178.6,134 V141.9 H191.2 V134 Z" fill="#adb2bb" fill-rule="evenodd"/>
<path d="M171.1,133.1 H179 L181.5,135.8 H188.9 V149.6 H171.1 Z" fill="#c4ae91"/>
<rect x="173.5" y="139" width="13" height="8.2" fill="#c2cad7"/>
<circle cx="178.5" cy="143" r="2.4" fill="#95b6d2"/>
<path d="M309.3,132.8 L317.6,139.65 L309.3,146.5 Z" fill="#565656"/>
<circle cx="376.2" cy="138.7" r="8.8" fill="none" stroke="#6a6a6a" stroke-width="2.1"/>
<path d="M376.2,130 V134.5 M376.2,142.9 V147.4 M367.5,138.7 H372 M380.4,138.7 H384.9" stroke="#6a6a6a" stroke-width="2.1"/>
<path d="M402.8,138 V136.4 H419.9 V138 M402.8,139.4 V141 H419.9 V139.4" fill="none" stroke="#6a6a6a" stroke-width="1.5"/>
<path d="M411.1,128.1 V131.5 M411.1,149.3 V146" stroke="#6a6a6a" stroke-width="1.5"/>
<path d="M407.8,131 H414.4 L411.1,134.6 Z M407.8,146.4 H414.4 L411.1,142.8 Z" fill="#6a6a6a"/>
<rect x="435.6" y="125.5" width="1" height="26" fill="#aab3c0"/><rect x="436.6" y="125.5" width="1" height="26" fill="#dfe4ec"/>
<polygon points="466.21,136.77 469.08,137.04 469.08,141.16 466.21,141.43 465.86,142.27 467.70,144.49 464.79,147.40 462.57,145.56 461.73,145.91 461.46,148.78 457.34,148.78 457.07,145.91 456.23,145.56 454.01,147.40 451.10,144.49 452.94,142.27 452.59,141.43 449.72,141.16 449.72,137.04 452.59,136.77 452.94,135.93 451.10,133.71 454.01,130.80 456.23,132.64 457.07,132.29 457.34,129.42 461.46,129.42 461.73,132.29 462.57,132.64 464.79,130.80 467.70,133.71 465.86,135.93" fill="#6e6e6e"/>
<circle cx="459.4" cy="139.1" r="7.3" fill="#6e6e6e"/><circle cx="459.4" cy="139.1" r="2.5" fill="#cad2df"/>
<path d="M472.9,137.1 H480.2 L476.55,141.9 Z" fill="#6e6e6e"/>
<rect x="495.2" y="130.2" width="4.9" height="17.5" fill="#717171"/><rect x="496.6" y="140.3" width="2.1" height="6" fill="#c9d1dd"/>
<path d="M505.5,135.5 H514.9" stroke="#717171" stroke-width="1.8"/><path d="M502,135.5 L507.3,131.7 V139.3 Z" fill="#717171"/>
<path d="M37.40,167.85 H52.20 L44.80,181.35 Z" fill="#fff"/>
<path d="M70,163.6 H81.2 L84.2,167.29999999999998 H92.5 V182.9 H70 Z M73.2,170.29999999999998 V179.79999999999998 H89.4 V170.29999999999998 Z" fill="#c59a5f" fill-rule="evenodd"/>
<rect x="84.3" y="174.5" width="10.7" height="10.8" fill="#3875d7"/><rect x="84.8" y="175" width="9.7" height="9.8" fill="#6ea8d0"/>
<path d="M72.00,198.00 L84.60,205.35 L72.00,212.70 Z" fill="#a7a7a7"/>
<path d="M102.8,194.6 H114.0 L117.0,198.29999999999998 H125.3 V213.9 H102.8 Z M106.0,201.29999999999998 V210.79999999999998 H122.19999999999999 V201.29999999999998 Z" fill="#c59a5f" fill-rule="evenodd"/>
<path d="M70.00,230.00 H84.80 L77.40,243.50 Z" fill="#a7a7a7"/>
<path d="M102.8,225.8 H114.0 L117.0,229.5 H125.3 V245.10000000000002 H102.8 Z M106.0,232.5 V242.0 H122.19999999999999 V232.5 Z" fill="#c59a5f" fill-rule="evenodd"/>
<path d="M102.50,261.00 H117.30 L109.90,274.50 Z" fill="#a7a7a7"/>
<path d="M135.4,256.8 H146.6 L149.6,260.5 H157.9 V276.1 H135.4 Z M138.6,263.5 V273.0 H154.8 V263.5 Z" fill="#c59a5f" fill-rule="evenodd"/>
<path d="M135.00,292.00 H149.80 L142.40,305.50 Z" fill="#a7a7a7"/>
<path d="M168,288.0 H179.2 L182.2,291.7 H190.5 V307.3 H168 Z M171.2,294.7 V304.2 H187.4 V294.7 Z" fill="#6fa6cf" fill-rule="evenodd"/>
<circle cx="211.6" cy="328.5" r="10.7" fill="#a9d5f5" stroke="#74b5e6" stroke-width="1.3"/>
<path d="M214.3,325.3 A4.3,4.6 0 1 0 214.3,332" fill="none" stroke="#606060" stroke-width="1.5"/>
<path d="M216.7,315.3 L224.6,321 L216.7,326.7 Z" fill="#2ea344"/>
<path d="M230.6,327.2 V325.6 A3.4,3.4 0 0 1 237.4,325.6" fill="none" stroke="#5fb35f" stroke-width="1.9"/>
<rect x="233" y="327" width="11.3" height="9.6" rx="1.6" fill="#5fb35f"/>
<path d="M236,330 H241.3 M238.65,330 V334" stroke="#fff" stroke-width="1.4"/>
<path d="M168,350.3 H179.2 L182.2,354.0 H190.5 V369.6 H168 Z M171.2,357.0 V366.5 H187.4 V357.0 Z" fill="#c59a5f" fill-rule="evenodd"/>
<rect x="180.2" y="359.3" width="12.6" height="12.2" fill="#fff"/>
<rect x="180.7" y="359.80" width="11.6" height="2.5" rx="0.8" fill="#e3ac12"/>
<rect x="181.5" y="360.20" width="10" height="0.9" fill="#f7d45a"/>
<rect x="180.7" y="362.60" width="11.6" height="2.5" rx="0.8" fill="#e3ac12"/>
<rect x="181.5" y="363.00" width="10" height="0.9" fill="#f7d45a"/>
<rect x="180.7" y="365.40" width="11.6" height="2.5" rx="0.8" fill="#e3ac12"/>
<rect x="181.5" y="365.80" width="10" height="0.9" fill="#f7d45a"/>
<rect x="180.7" y="368.20" width="11.6" height="2.5" rx="0.8" fill="#e3ac12"/>
<rect x="181.5" y="368.60" width="10" height="0.9" fill="#f7d45a"/>
<path d="M102.50,385.00 H117.30 L109.90,398.50 Z" fill="#a7a7a7"/>
<path d="M135.4,380.8 H146.6 L149.6,384.5 H157.9 V400.1 H135.4 Z M138.6,387.5 V397.0 H154.8 V387.5 Z" fill="#c59a5f" fill-rule="evenodd"/>
<path d="M168,411.9 H179.2 L182.2,415.59999999999997 H190.5 V431.2 H168 Z M171.2,418.59999999999997 V428.09999999999997 H187.4 V418.59999999999997 Z" fill="#6cb461" fill-rule="evenodd"/>
<path d="M71.70,446.35 L84.30,453.70 L71.70,461.05 Z" fill="#a7a7a7"/>
<path d="M102.8,443.1 H114.0 L117.0,446.8 H125.3 V462.40000000000003 H102.8 Z M106.0,449.8 V459.3 H122.19999999999999 V449.8 Z" fill="#de7064" fill-rule="evenodd"/>
<path d="M105,472 H115.8 L121.5,477.7 V494.2 H105 Z" fill="#fff" stroke="#9d9d9d" stroke-width="2"/>
<path d="M115.5,472 V478 H121.5" fill="none" stroke="#9d9d9d" stroke-width="1.3"/>
<rect x="114.5" y="484.5" width="12.5" height="12.2" fill="#fff"/><rect x="115" y="485" width="11.5" height="11.2" fill="#575757"/>
<rect x="117.8" y="492.6" width="5.2" height="1.5" fill="#fff"/>
<text x="101.5" y="522.6" font-family="Liberation Sans" font-weight="bold" font-style="italic" font-size="26.5" fill="#5f94b9" letter-spacing="-0.5">m</text>
<path d="M39.00,539.35 L51.60,546.70 L39.00,554.05 Z" fill="#a7a7a7"/>
<rect x="69.7" y="540.5" width="6.5" height="16.8" fill="#8c8c8c"/><rect x="76.6" y="540.5" width="5.5" height="16.8" fill="#a5a5a5"/>
<path d="M69.7,545 H82 M69.7,552 H82" stroke="#c8c8c8" stroke-width="0.9"/>
<rect x="82.5" y="536.2" width="5" height="21.1" fill="#e07a72"/><path d="M82.5,541 H87.5 M82.5,552 H87.5" stroke="#f4b7b0" stroke-width="0.9"/>
<rect x="87.9" y="540.8" width="5.2" height="16.5" fill="#72b2e2"/><path d="M87.9,545 H93.1 M87.9,552 H93.1" stroke="#bcdcf4" stroke-width="0.9"/>
<circle cx="553.9" cy="138.5" r="10.7" fill="#a9d5f5" stroke="#74b5e6" stroke-width="1.3"/>
<path d="M556.6,135.3 A4.3,4.6 0 1 0 556.6,142" fill="none" stroke="#606060" stroke-width="1.5"/>
<path d="M558.9,126 L567,131.65 L558.9,137.3 Z" fill="#2ea344"/>
<path d="M664.7,133.6 L674.4,144.1 M674.4,133.6 L664.7,144.1" stroke="#707070" stroke-width="2.1"/>
<path d="M542.7,168 L554,176.5 L542.7,185 Z" fill="#6aa56f"/>
<path d="M542.7,217.4 L554,225.65 L542.7,233.9 Z" fill="#6aa56f"/>
<path d="M577.1,221 H590.5 V231.3 L583.8,237 L577.1,231.3 Z" fill="#fff" stroke="#c8c8c8" stroke-width="1.2"/>
<path d="M580,227 H587.6" stroke="#c8c8c8" stroke-width="1.2"/>
<path d="M577.1,283.2 H590.5 V272.9 L583.8,267.2 L577.1,272.9 Z" fill="#fff" stroke="#c8c8c8" stroke-width="1.2"/>
<path d="M580,277.6 H587.6" stroke="#c8c8c8" stroke-width="1.2"/>
<rect x="641" y="239.5" width="1" height="24" fill="#e6e6e6"/>
<path d="M1207,172.3 L1213.5,179.2 L1222.6,170" fill="none" stroke="#5aa24a" stroke-width="3.3"/>
<g stroke="#5f5f5f" stroke-width="1.4" fill="none" stroke-linecap="round"><path d="M1238.6,137.5 C1238.8,139.5 1239.8,141 1241,142.2 M1249.8,137.5 C1249.6,139.5 1248.6,141 1247.4,142.2"/><path d="M1236.2,144.5 L1242,148.3 M1252.2,144.5 L1246.4,148.3"/><path d="M1236.2,149.4 L1242,150 M1252.2,149.4 L1246.4,150"/><path d="M1237.6,157.5 C1237.6,154 1239,151.8 1242,151 M1250.8,157.5 C1250.8,154 1249.4,151.8 1246.4,151"/></g>
<circle cx="1242.6" cy="139.9" r="0.8" fill="#555"/><circle cx="1245.8" cy="139.9" r="0.8" fill="#555"/>
<ellipse cx="1244.2" cy="143.2" rx="4" ry="2.3" fill="#a37ac4"/>
<ellipse cx="1244.2" cy="148.8" rx="2.5" ry="3.3" fill="#a37ac4"/>
<ellipse cx="1244.2" cy="155.1" rx="4.1" ry="3.6" fill="#9d72bd"/>
<text x="1232.5" y="298.7" font-family="Liberation Sans" font-weight="bold" font-style="italic" font-size="27" fill="#5f94b9" letter-spacing="-0.5">m</text>
<path d="M53.8,866.7 L54.8,863.6 Q59.5,862 64,863.6 L65,866.7 Z" fill="#2f8ad0"/>
<ellipse cx="59.5" cy="857.3" rx="6.6" ry="6.3" fill="#f1b86a"/>
<circle cx="52.6" cy="858.5" r="1.4" fill="#f1b86a"/><circle cx="66.4" cy="858.5" r="1.4" fill="#f1b86a"/>
<path d="M52.8,856 C52.5,850.5 55.5,847.9 59.8,847.9 C64,847.9 66.8,850.5 66.5,855.5 L65.2,853.5 C61.5,853.8 57.5,853.2 54.5,851.8 C54,853.2 53.5,854.8 52.8,856 Z" fill="#696969"/>
<circle cx="57.3" cy="857.5" r="0.9" fill="#555"/><circle cx="61.6" cy="857.5" r="0.9" fill="#555"/>
<circle cx="50.9" cy="850.9" r="5.4" fill="#fff" stroke="#8a8a8a" stroke-width="1"/>
<path d="M49.2,848.8 H53.8 M49.2,850.8 H53.8 M49.2,852.8 H53.8" stroke="#666" stroke-width="0.8"/>
<rect x="182.6" y="845" width="21.1" height="21" fill="#7c7c7c"/>
<rect x="184" y="849.8" width="18.3" height="15" fill="#d9d9d9"/>
<rect x="186.1" y="852" width="13.9" height="10.8" fill="#555"/>
<path d="M188.2,854.6 L192.6,857.6 L188.2,860.6" fill="none" stroke="#eee" stroke-width="1.3"/><path d="M193.2,860.6 H198" stroke="#eee" stroke-width="1.1"/>
<path d="M1104.5,847.2 H1118 A3,3 0 0 1 1121,850.2 V858.8 A3,3 0 0 1 1118,861.8 H1117.5 L1118.3,864.7 L1114,861.8 H1104.5 A3,3 0 0 1 1101.5,858.8 V850.2 A3,3 0 0 1 1104.5,847.2 Z" fill="#b3b3b3"/>
<rect x="7.3" y="878.6" width="21" height="17.8" fill="#c4c4c4" stroke="#585858" stroke-width="1.6"/>
<path d="M8.8,880.5 H26.8 M8.8,880.5 V894.8" stroke="#e0e0e0" stroke-width="1.2"/>
<rect x="6.5" y="899.1" width="22.5" height="1.8" fill="#5c5c5c"/>
<path d="M1077.5,888.9 H1085.0 L1081.25,883.5 Z M1077.5,890.9 H1085.0 L1081.25,895.4 Z" fill="#505050"/>
<path d="M1160.55,888.9 H1168.05 L1164.3,883.5 Z M1160.55,890.9 H1168.05 L1164.3,895.4 Z" fill="#505050"/>
<path d="M1191.6,889.5 V887 A3.1,3.1 0 0 1 1197.8,887" fill="none" stroke="#8a8a8a" stroke-width="1.8"/>
<rect x="1194.2" y="889" width="10.8" height="8.5" rx="1.6" fill="#8a8a8a"/>
<path d="M1197,891.6 H1202.2 M1199.6,891.6 V895.3" stroke="#fff" stroke-width="1.3"/>
<g fill="none" stroke="#777" stroke-width="1.8"><path d="M1231.4,886.3 V881 A2.5,2.5 0 0 1 1233.9,878.5 H1242.7 A2.5,2.5 0 0 1 1245.2,881 V886.3"/><path d="M1228.2,886.6 H1248.5"/><path d="M1231.6,887 V890.5 C1231.6,895 1234.3,897.6 1238.3,897.6 C1242.3,897.6 1245,895 1245,890.5 V887"/><path d="M1235,894.8 C1236.5,892.6 1240.1,892.6 1241.6,894.8"/></g>
<circle cx="1238.3" cy="882.3" r="1.5" fill="#777"/>
<path d="M1234.2,889.3 H1236.8 M1239.8,889.3 H1242.4" stroke="#777" stroke-width="1.1"/>
<path d="M1230,900.6 L1231.5,897.6 H1236 L1236.5,900.6 Z M1240.1,900.6 L1240.6,897.6 H1245.1 L1246.6,900.6 Z" fill="#777"/>
<path d="M0,898.5 Q0,905.6 6.5,905.6 H0 Z" fill="#666"/>
<path d="M1258,898.5 Q1258,905.6 1251.5,905.6 H1258 Z" fill="#666"/>
</svg>
</body></html>
